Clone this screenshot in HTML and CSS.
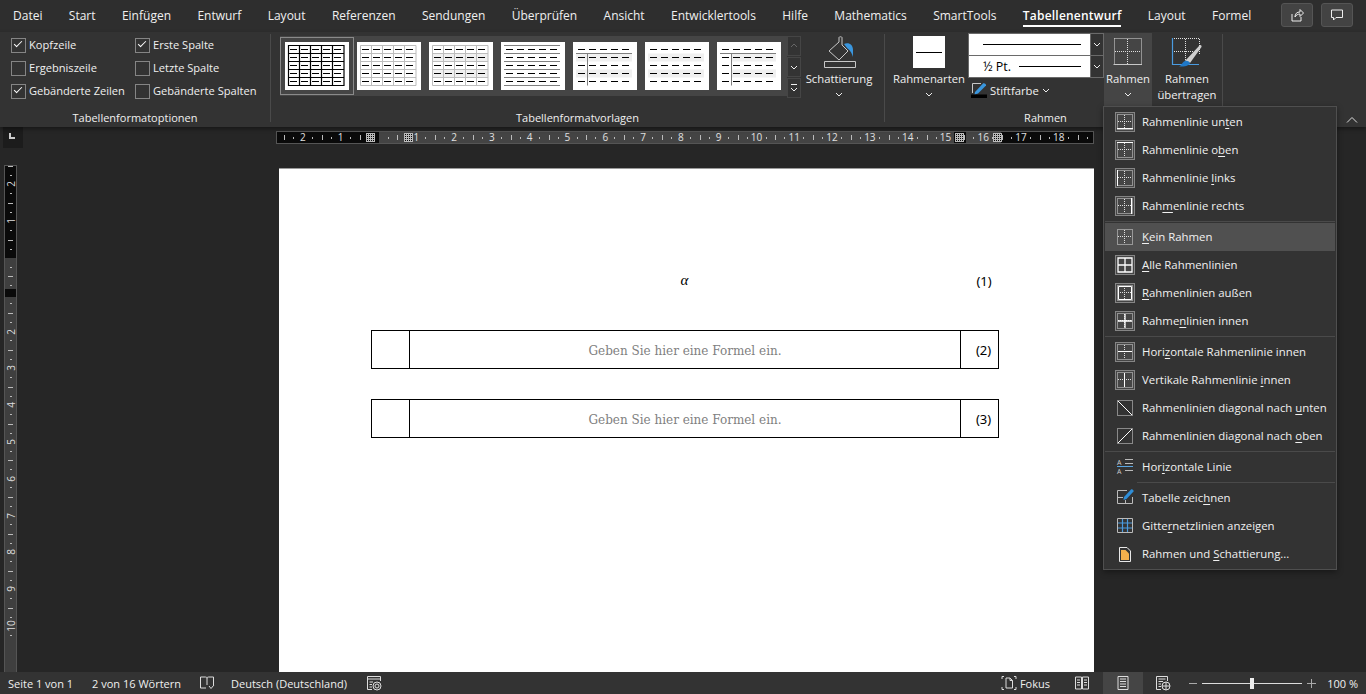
FILE: index.html
```html
<!DOCTYPE html>
<html lang="de">

<head>
    <meta charset="UTF-8" />
    <title>Word - Tabellenentwurf</title>
    <link rel="stylesheet" href="styles.css">
</head>

<body>

    <!-- shared drawings -->
    <svg class="defs" aria-hidden="true">
        <symbol id="dots" viewBox="0 0 20 20">
            <path class="dot" d="M2.5 2.5H17.5V17.5H2.5ZM9.5 3V17M3 9.5H17" />
        </symbol>
        <symbol id="dash" viewBox="0 0 64 48">
            <path class="dash" d="M5 7.5H60M5 15.5H60M5 23.5H60M5 31.5H60M5 39.5H60" />
        </symbol>
    </svg>

    <nav class="tabs">
        <a>Datei</a>
        <a>Start</a>
        <a>Einfügen</a>
        <a>Entwurf</a>
        <a>Layout</a>
        <a>Referenzen</a>
        <a>Sendungen</a>
        <a>Überprüfen</a>
        <a>Ansicht</a>
        <a>Entwicklertools</a>
        <a>Hilfe</a>
        <a>Mathematics</a>
        <a>SmartTools</a>
        <a class="active">Tabellenentwurf</a>
        <a>Layout</a>
        <a>Formel</a>
        <div class="tab-btns">
            <button class="tab-btn"><svg viewBox="0 0 16 16"><path d="M3 7V14H12V10M6 10C6 6.5 8 5 11 5V2.5L14.5 6 11 9.5V7C9 7 7 8 6 10Z" /></svg></button>
            <button class="tab-btn"><svg viewBox="0 0 16 16"><path d="M2.5 3H13.5V10.5H7L4.5 13V10.5H2.5Z" /></svg></button>
        </div>
    </nav>

    <section class="ribbon">
        <div class="group group-options">
            <div class="group-body options">
                <label class="check on">Kopfzeile</label>
                <label class="check on">Erste Spalte</label>
                <label class="check">Ergebniszeile</label>
                <label class="check">Letzte Spalte</label>
                <label class="check on">Gebänderte Zeilen</label>
                <label class="check">Gebänderte Spalten</label>
            </div>
            <div class="group-label">Tabellenformatoptionen</div>
        </div>

        <div class="group group-styles">
            <div class="group-body styles">
                <div class="gallery">
                    <div class="thumb selected"><svg viewBox="0 0 64 48">
                            <use href="#dash" />
                            <path class="k" d="M3.5 3.5H59V43.5H3.5ZM3.5 11.5H59M3.5 19.5H59M3.5 27.5H59M3.5 35.5H59M14.5 3.5V43.5M25.5 3.5V43.5M36.5 3.5V43.5M47.5 3.5V43.5" />
                        </svg></div>
                    <div class="thumb"><svg viewBox="0 0 64 48">
                            <use href="#dash" />
                            <path class="l" d="M3.5 3.5H59V43.5H3.5ZM3.5 11.5H59M3.5 19.5H59M3.5 27.5H59M3.5 35.5H59M14.5 3.5V43.5M25.5 3.5V43.5M36.5 3.5V43.5M47.5 3.5V43.5" />
                        </svg></div>
                    <div class="thumb"><svg viewBox="0 0 64 48">
                            <path class="band" d="M3 11.5H59V19.5H3ZM3 27.5H59V35.5H3Z" />
                            <use href="#dash" />
                            <path class="l" d="M3.5 3.5H59V43.5H3.5ZM3.5 11.5H59M3.5 19.5H59M3.5 27.5H59M3.5 35.5H59M14.5 3.5V43.5M25.5 3.5V43.5M36.5 3.5V43.5M47.5 3.5V43.5" />
                        </svg></div>
                    <div class="thumb"><svg viewBox="0 0 64 48">
                            <use href="#dash" />
                            <path class="m" d="M3 3.5H59M3 11.5H59M3 19.5H59M3 27.5H59M3 35.5H59M3 43.5H59" />
                        </svg></div>
                    <div class="thumb"><svg viewBox="0 0 64 48">
                            <path class="band" d="M3 11.5H59V19.5H3ZM3 27.5H59V35.5H3Z" />
                            <use href="#dash" />
                            <path class="m" d="M3 11.5H59M14.5 11.5V43.5" />
                        </svg></div>
                    <div class="thumb"><svg viewBox="0 0 64 48">
                            <path class="band" d="M3 11.5H59V19.5H3ZM3 27.5H59V35.5H3Z" />
                            <use href="#dash" />
                        </svg></div>
                    <div class="thumb"><svg viewBox="0 0 64 48">
                            <path class="band" d="M14 11.5H59V19.5H14ZM14 27.5H59V35.5H14Z" />
                            <use href="#dash" />
                            <path class="m" d="M3 11.5H59M14.5 11.5V43.5" />
                        </svg></div>
                </div>
                <div class="scroller">
                    <span class="off"><svg viewBox="0 0 12 18"><path d="M3 10L6 7 9 10" /></svg></span>
                    <span><svg viewBox="0 0 12 18"><path d="M3 8L6 11 9 8" /></svg></span>
                    <span><svg viewBox="0 0 12 18"><path d="M3 5.5H9M3 9L6 12 9 9" /></svg></span>
                </div>
                <div class="big shading">
                    <svg class="big-ico" width="36" height="32" viewBox="0 0 36 32">
                        <path class="stroke" d="M8 15L18 6V1.5C18 0.5 21 0.5 21 1.5V9L27 15 18 24Z" />
                        <path d="M23 8C28 6 32 9 32 14V21C31 18 30 15 26 12Z" fill="#3a96dd" />
                        <path class="stroke" d="M3.5 25.5H34.5V31.5H3.5Z" fill="#4a4a4a" />
                    </svg>
                    <span>Schattierung</span>
                    <svg class="chev" viewBox="0 0 8 5"><path d="M1 1L4 4 7 1" /></svg>
                </div>
            </div>
            <div class="group-label">Tabellenformatvorlagen</div>
        </div>

        <div class="group group-borders">
            <div class="group-body borders">
                <div class="big border-styles">
                    <div class="swatch"><i></i></div>
                    <span>Rahmenarten</span>
                    <svg class="chev" viewBox="0 0 8 5"><path d="M1 1L4 4 7 1" /></svg>
                </div>
                <div class="pen">
                    <div class="combo">
                        <div class="combo-val"><i></i></div>
                        <div class="combo-arrow"><svg class="chev" viewBox="0 0 8 5"><path d="M1 1L4 4 7 1" /></svg></div>
                    </div>
                    <div class="combo">
                        <div class="combo-val"><b>½ Pt.</b><i></i></div>
                        <div class="combo-arrow"><svg class="chev" viewBox="0 0 8 5"><path d="M1 1L4 4 7 1" /></svg></div>
                    </div>
                    <div class="pen-color">
                        <svg width="16" height="16" viewBox="0 0 16 16">
                            <path class="stroke" d="M1.5 11V1.5H10" />
                            <path d="M4 10L12 1.5C13 0.5 15.5 2 15 3.5L7 11.5 3.5 12.5Z" fill="#3a96dd" />
                            <path d="M0 12.5H16V16H0Z" fill="#000" />
                        </svg>
                        <span>Stiftfarbe</span>
                        <svg class="chev" viewBox="0 0 8 5"><path d="M1 1L4 4 7 1" /></svg>
                    </div>
                </div>
                <div class="big frame-btn open">
                    <svg class="big-ico" width="30" height="30" viewBox="0 0 30 30">
                        <path class="dot" d="M1.5 1.5H28.5V27M1.5 1.5V27M14.5 2V27M2 14.5H28" />
                        <path class="stroke" d="M0.5 27.5H29" />
                    </svg>
                    <span>Rahmen</span>
                    <svg class="chev" viewBox="0 0 8 5"><path d="M1 1L4 4 7 1" /></svg>
                </div>
                <div class="big frame-copy">
                    <svg class="big-ico" width="32" height="30" viewBox="0 0 32 30">
                        <path class="dot" d="M3 1.5H28.5V17M14.5 2V27M3 14.5H22" />
                        <path class="blue" d="M1.5 1V27.5H28" />
                        <path d="M14 24L28 9C29 7 31 8 30.5 10L19 26Z" fill="#cfcfcf" />
                        <path d="M8 29.5C11 28.5 11 25 14 24 16 23 19 25 19 26 18 28.5 15 30 8 29.5Z" fill="#1f78c8" />
                    </svg>
                    <span>Rahmen<br>übertragen</span>
                </div>
            </div>
            <div class="group-label">Rahmen</div>
        </div>

        <svg class="collapse" viewBox="0 0 12 8"><path d="M1 6.5L6 1.5 11 6.5" /></svg>
    </section>

    <main class="work">
        <div class="left-col">
            <div class="corner"><i></i></div>
            <div class="vruler">
                <div class="vcell"><span>2</span></div>
                <div class="vcell"><span>1</span></div>
                <div class="vcell"></div>
                <div class="vcell"></div>
                <div class="vcell"><span>2</span></div>
                <div class="vcell"><span>3</span></div>
                <div class="vcell"><span>4</span></div>
                <div class="vcell"><span>5</span></div>
                <div class="vcell"><span>6</span></div>
                <div class="vcell"><span>7</span></div>
                <div class="vcell"><span>8</span></div>
                <div class="vcell"><span>9</span></div>
                <div class="vcell"><span>10</span></div>
            </div>
        </div>

        <div class="page-col">
            <div class="hruler">
                <div class="hcell">2</div>
                <div class="hcell">1</div>
                <div class="hcell"></div>
                <div class="hcell">1</div>
                <div class="hcell">2</div>
                <div class="hcell">3</div>
                <div class="hcell">4</div>
                <div class="hcell">5</div>
                <div class="hcell">6</div>
                <div class="hcell">7</div>
                <div class="hcell">8</div>
                <div class="hcell">9</div>
                <div class="hcell">10</div>
                <div class="hcell">11</div>
                <div class="hcell">12</div>
                <div class="hcell">13</div>
                <div class="hcell">14</div>
                <div class="hcell">15</div>
                <div class="hcell">16</div>
                <div class="hcell">17</div>
                <div class="hcell">18</div>
                <div class="hcell"></div>
                <i class="hatch h1"></i>
                <i class="hatch h2"></i>
                <i class="hatch h3"></i>
                <i class="hatch h4"></i>
            </div>
            <article class="page">
                <div class="eq plain">
                    <div></div>
                    <div class="eq-body alpha">α</div>
                    <div class="eq-num">(1)</div>
                </div>
                <div class="eq boxed">
                    <div></div>
                    <div class="eq-body holder">Geben Sie hier eine Formel ein.</div>
                    <div class="eq-num">(2)</div>
                </div>
                <div class="eq boxed">
                    <div></div>
                    <div class="eq-body holder">Geben Sie hier eine Formel ein.</div>
                    <div class="eq-num">(3)</div>
                </div>
            </article>
        </div>
    </main>

    <footer class="status">
        <span class="s-page">Seite 1 von 1</span>
        <span class="s-words">2 von 16 Wörtern</span>
        <svg class="s-ico s-book" viewBox="0 0 16 16"><path d="M1.5 2H6.5C7.5 2 8 2.5 8 3.5V10M8 3.5C8 2.5 8.5 2 9.5 2H14.5V10M1.5 2V13H7M10 11L12 13.5 15 10" /></svg>
        <span class="s-lang">Deutsch (Deutschland)</span>
        <svg class="s-ico s-macro" viewBox="0 0 16 16"><path d="M1.5 1.5H14.5V6M1.5 1.5V14.5H6M1.5 4H14.5M3.5 7H7M3.5 9.5H6M3.5 12H6" /><circle cx="11" cy="11" r="2" /><circle cx="11" cy="11" r="4" /></svg>
        <div class="s-right">
            <svg class="s-ico s-focus" viewBox="0 0 16 16"><path d="M1 4V1.5H3M13 1.5H15V4M1 12V14.5H3M13 14.5H15V12M5 3H9L11.5 5.5V13H5ZM9 3V5.5H11.5" /></svg>
            <span class="s-fokus">Fokus</span>
            <svg class="s-ico s-read" viewBox="0 0 16 16"><path d="M1.5 2H7.5V14H1.5ZM8.5 2H14.5V14H8.5ZM3 5H6M3 7.5H6M3 10H6M10 5H13M10 7.5H13M10 10H13" /></svg>
            <div class="s-view"><svg class="s-ico" viewBox="0 0 16 16"><path d="M3 1.5H13V14.5H3ZM5 4H11M5 6.5H11M5 9H11M5 11.5H11" /></svg></div>
            <svg class="s-ico s-web" viewBox="0 0 16 16"><path d="M6 14.5H1.5V1.5H12.5V6M3.5 4H10.5M3.5 6.5H8M3.5 9H6M3.5 11.5H6" /><circle cx="11" cy="11" r="4" /><path d="M7 11H15M11 7V15" /></svg>
            <div class="zoom">
                <i class="z-minus"></i>
                <div class="z-track"><i class="z-thumb"></i></div>
                <i class="z-plus"></i>
            </div>
            <span class="s-pct">100 %</span>
        </div>
    </footer>

    <!-- Rahmen dropdown -->
    <div class="menu">
        <div class="item"><svg class="box" viewBox="0 0 20 20"><use href="#dots" /><path d="M2 16.5H18" /></svg><span>Rahmenlinie un<u>t</u>en</span></div>
        <div class="item"><svg class="box" viewBox="0 0 20 20"><use href="#dots" /><path d="M2 2.5H18" /></svg><span>Rahmenlinie o<u>b</u>en</span></div>
        <div class="item"><svg class="box" viewBox="0 0 20 20"><use href="#dots" /><path d="M2.5 2V18" /></svg><span>Rahmenlinie <u>l</u>inks</span></div>
        <div class="item"><svg class="box" viewBox="0 0 20 20"><use href="#dots" /><path d="M16.5 2V18" /></svg><span>Rah<u>m</u>enlinie rechts</span></div>
        <hr>
        <div class="item hover"><svg class="box none" viewBox="0 0 20 20"><use href="#dots" /></svg><span><u>K</u>ein Rahmen</span></div>
        <div class="item"><svg class="box" viewBox="0 0 20 20"><path class="wide" d="M3 3H17V17H3ZM10 3V17M3 10H17" /></svg><span><u>A</u>lle Rahmenlinien</span></div>
        <div class="item"><svg class="box" viewBox="0 0 20 20"><use href="#dots" /><path d="M3.5 3.5H16.5V16.5H3.5Z" /></svg><span><u>R</u>ahmenlinien außen</span></div>
        <div class="item"><svg class="box" viewBox="0 0 20 20"><use href="#dots" /><path class="wide" d="M10 3V17M3 10H17" /></svg><span>Rahme<u>n</u>linien innen</span></div>
        <hr>
        <div class="item"><svg class="box" viewBox="0 0 20 20"><use href="#dots" /><path d="M3 9.5H17" /></svg><span>Hori<u>z</u>ontale Rahmenlinie innen</span></div>
        <div class="item"><svg class="box" viewBox="0 0 20 20"><use href="#dots" /><path d="M9.5 3V17" /></svg><span>Vertikale Rahmenlinie <u>i</u>nnen</span></div>
        <div class="item"><svg class="box none" viewBox="0 0 20 20"><path class="dot" d="M2.5 2.5H17.5V17.5H2.5Z" /><path d="M3 3L17 17" /></svg><span>Rahmenlinien diagonal nach <u>u</u>nten</span></div>
        <div class="item"><svg class="box none" viewBox="0 0 20 20"><path class="dot" d="M2.5 2.5H17.5V17.5H2.5Z" /><path d="M3 17L17 3" /></svg><span>Rahmenlinien diagonal nach <u>o</u>ben</span></div>
        <hr>
        <div class="item"><svg class="box none" viewBox="0 0 20 20"><path class="grey" d="M10 2.5H18M10 6.5H18M10 13.5H18" /><path class="thin-blue" d="M2 9.5H18" /><text x="2" y="8">A</text><text x="2" y="17">A</text></svg><span>Hor<u>i</u>zontale Linie</span></div>
        <hr class="short">
        <div class="item"><svg class="box none" viewBox="0 0 20 20"><path class="grey" d="M2.5 2.5H12M2.5 2.5V15.5H17.5V9M2.5 9.5H8M10.5 12V15.5" /><path d="M9 9L16 1.5C17 0.5 19 2 18.5 3.5L11.5 11 8.5 12Z" class="fill-blue" /></svg><span>Tabelle zeic<u>h</u>nen</span></div>
        <div class="item"><svg class="box none" viewBox="0 0 20 20"><path d="M2.5 2.5H17.5V16.5H2.5Z" class="grey" /><path class="blue" d="M3 7H17M3 12H17M7.5 3V16M12.5 3V16" /></svg><span>Gitte<u>r</u>netzlinien anzeigen</span></div>
        <div class="item"><svg class="box none" viewBox="0 0 20 20"><path class="light" d="M4.5 3.5H12L15.5 7V17.5H4.5Z" /><path d="M6 6H10.5L14 9.5V16H6Z" class="fill-orange" /></svg><span>Rahmen und <u>S</u>chattierung...</span></div>
    </div>

</body>

</html>
```

FILE: styles.css
```css
* {
    margin: 0;
    padding: 0;
    box-sizing: border-box;
}

html,
body {
    height: 694px;
    overflow: hidden;
}

body {
    position: relative;
    display: flex;
    flex-direction: column;
    background: #262626;
    color: #f0f0f0;
    font-family: 'Open Sans', 'Noto Sans', sans-serif;
    font-size: 12px;
}

.defs {
    position: absolute;
    width: 0;
    height: 0;
}

.dot {
    fill: none;
    stroke: #e0e0e0;
    stroke-width: 1;
    stroke-dasharray: 1 1;
}

.dash {
    fill: none;
    stroke: #000;
    stroke-width: 1.1;
    stroke-dasharray: 7 4;
}

.stroke {
    fill: none;
    stroke: #c8c8c8;
}

.blue {
    fill: none;
    stroke: #4a9be0;
    stroke-width: 1.2;
}

/* tabs */
.tabs {
    display: flex;
    align-items: flex-start;
    height: 32px;
    padding-left: 13px;
    gap: 26.4px;
    background: #2e2e2e;
}

.tabs a {
    height: 27px;
    line-height: 31px;
    font-size: 12px;
    white-space: nowrap;
}

.tabs a.active {
    font-weight: 600;
    letter-spacing: 0.2px;
    color: #fff;
    border-bottom: 2px solid #fff;
}

.tab-btns {
    display: flex;
    gap: 8px;
    margin: 3px 13px 0 auto;
}

.tab-btn {
    width: 32px;
    height: 24px;
    background: #434343;
    border: 1px solid #555;
    border-radius: 3px;
    display: flex;
    align-items: center;
    justify-content: center;
}

.tab-btn svg {
    width: 16px;
    height: 16px;
    fill: none;
    stroke: #eee;
}

/* ribbon */
.ribbon {
    position: relative;
    display: flex;
    height: 95px;
    background: #333;
    box-shadow: 0 2px 4px rgba(0, 0, 0, 0.4);
    z-index: 2;
}

.group {
    display: flex;
    flex-direction: column;
    border-right: 1px solid #4a4a4a;
    margin: 2px 0 5px;
}

.group-body {
    flex: 1 1 0;
    min-height: 0;
    display: flex;
}

.group-label {
    height: 20px;
    line-height: 31px;
    text-align: center;
    font-size: 11px;
}

.group-options {
    width: 271px;
}

.options {
    display: grid;
    grid-template-columns: 124px 1fr;
    grid-auto-rows: 23px;
    padding: 0 0 0 11px;
}

.check {
    position: relative;
    padding-left: 18px;
    line-height: 21px;
    font-size: 11.1px;
    white-space: nowrap;
}

.check::before {
    content: "";
    position: absolute;
    left: 0;
    top: 4px;
    width: 13px;
    height: 13px;
    border: 1px solid #858585;
}

.check.on::after {
    content: "";
    position: absolute;
    left: 3px;
    top: 7px;
    width: 7px;
    height: 3px;
    border-left: 1px solid #fff;
    border-bottom: 1px solid #fff;
    transform: rotate(-45deg);
}

.group-styles {
    width: 614px;
}

.styles {
    padding-left: 9px;
}

.gallery {
    display: flex;
    align-items: center;
    gap: 8px;
    width: 507px;
    height: 60px;
    margin-top: 2px;
    padding-left: 5px;
    background: #454545;
}

.thumb {
    position: relative;
    width: 64px;
    height: 48px;
    background: #fff;
}

.thumb svg {
    display: block;
    width: 64px;
    height: 48px;
}

.thumb.selected {
    outline: 4px solid #454545;
    box-shadow: 0 0 0 5px #8a8a8a;
}

.k,
.l,
.m {
    fill: none;
}

.k {
    stroke: #000;
    stroke-width: 1.2;
}

.l {
    stroke: #bdbdbd;
}

.m {
    stroke: #7f7f7f;
}

.band {
    fill: #f0f0f0;
}

.scroller {
    display: flex;
    flex-direction: column;
    gap: 1px;
    width: 14px;
    margin: 2px 0 0;
}

.scroller span {
    display: block;
    width: 14px;
    height: 20px;
    border: 1px solid #454545;
}

.scroller svg {
    display: block;
    width: 12px;
    height: 18px;
    fill: none;
    stroke: #eee;
}

.scroller .off svg {
    stroke: #666;
}

.big {
    display: flex;
    flex-direction: column;
    align-items: center;
    line-height: 16px;
    font-size: 11.3px;
    text-align: center;
    white-space: nowrap;
}

.big-ico {
    display: block;
    flex: none;
}

.chev {
    display: block;
    width: 8px;
    height: 5px;
    fill: none;
    stroke: #eee;
}

.big .chev {
    margin-top: 5px;
}

.shading {
    width: 76px;
    padding-top: 2px;
}

.shading span {
    margin-top: 3px;
}

.group-borders {
    width: 338px;
}

.group-borders .group-label {
    padding-right: 16px;
}

.borders {
    padding-left: 5px;
}

.border-styles {
    width: 78px;
    padding-top: 2px;
}

.swatch {
    display: flex;
    align-items: center;
    justify-content: center;
    width: 32px;
    height: 32px;
    background: #fff;
}

.swatch i {
    display: block;
    width: 26px;
    height: 1px;
    background: #000;
}

.border-styles span {
    margin-top: 3px;
}

.pen {
    width: 136px;
    margin-top: -1px;
}

.combo {
    display: flex;
    height: 23px;
    border: 1px solid #6a6a6a;
}

.combo + .combo {
    margin-top: -1px;
}

.combo-val {
    flex: 1;
    display: flex;
    align-items: center;
    gap: 8px;
    padding: 0 9px 0 14px;
    background: #fff;
    color: #000;
    font-size: 12.5px;
}

.combo-val b {
    font-weight: 400;
}

.combo-val i {
    flex: 1;
    height: 1px;
    background: #000;
}

.combo-arrow {
    display: flex;
    align-items: center;
    justify-content: center;
    width: 13px;
    border-left: 1px solid #6a6a6a;
}

.pen-color {
    display: flex;
    align-items: center;
    gap: 3px;
    height: 18px;
    margin-top: 3px;
    padding-left: 3px;
    font-size: 11.3px;
}

.frame-btn {
    flex: none;
    width: 48px;
    height: 74px;
    margin-top: -1px;
    padding-top: 4px;
}

.frame-btn.open {
    background: #454545;
}

.frame-btn span {
    margin-top: 4px;
}

.frame-copy {
    width: 70px;
    padding-top: 3px;
}

.frame-copy span {
    margin-top: 4px;
}

.collapse {
    position: absolute;
    right: 8px;
    top: 84px;
    width: 12px;
    height: 8px;
    fill: none;
    stroke: #ddd;
}

/* document area */
.work {
    flex: 1;
    display: flex;
    min-height: 0;
    overflow: hidden;
}

.left-col {
    width: 276px;
}

.corner {
    width: 20px;
    height: 21px;
    margin-left: 3px;
    padding: 6px;
    background: #1c1c1c;
}

.corner i {
    display: block;
    width: 6px;
    height: 6px;
    border-left: 2px solid #ccc;
    border-bottom: 2px solid #ccc;
}

.vruler {
    width: 13px;
    height: 520px;
    margin: 17px 0 0 4px;
    border: 1px solid #555;
    overflow: hidden;
    background: linear-gradient(to bottom, #0a0a0a 92px, #3f3f3f 92px, #3f3f3f 123px, #0a0a0a 123px, #0a0a0a 131px, #3f3f3f 131px);
}

.vcell {
    position: relative;
    display: flex;
    align-items: center;
    justify-content: center;
    height: 36.8px;
    font-size: 10px;
    color: #ddd;
    background:
        linear-gradient(#bbb, #bbb) center 0 / 5px 1px no-repeat,
        linear-gradient(#bbb, #bbb) center 9px / 2px 1px no-repeat,
        linear-gradient(#bbb, #bbb) center 27px / 2px 1px no-repeat;
}

.vcell span {
    display: block;
    transform: rotate(-90deg);
    line-height: 10px;
}

.page-col {
    width: 818px;
}

.hruler {
    position: relative;
    display: flex;
    height: 13px;
    margin-top: 4px;
    padding-left: 7px;
    border: 1px solid #555;
    overflow: hidden;
    background: linear-gradient(to right, #0a0a0a 102px, #444 102px, #444 677px, #0a0a0a 677px, #0a0a0a 689px, #444 689px, #444 724px, #0a0a0a 724px);
}

.hcell {
    flex: none;
    width: 37.8px;
    text-align: center;
    line-height: 11px;
    font-size: 10px;
    color: #e0e0e0;
    background:
        linear-gradient(#bbb, #bbb) 0 center / 1px 5px no-repeat,
        linear-gradient(#bbb, #bbb) 9px center / 1px 2px no-repeat,
        linear-gradient(#bbb, #bbb) 28px center / 1px 2px no-repeat;
}

.hatch {
    position: absolute;
    top: 1px;
    width: 9px;
    height: 9px;
    background:
        repeating-linear-gradient(to right, #bbb 0 1px, transparent 1px 2px),
        repeating-linear-gradient(to bottom, #bbb 0 1px, #0a0a0a 1px 2px);
}

.h1 {
    left: 89px;
}

.h2 {
    left: 127px;
}

.h3 {
    left: 678px;
}

.h4 {
    left: 716px;
}

.page {
    width: 815px;
    height: 505px;
    margin: 24px 0 0 3px;
    padding: 92px 95px 0 92px;
    background: #fff;
    border-top: 1px solid #9a9a9a;
    color: #000;
}

.eq {
    display: grid;
    grid-template-columns: 37px 1fr 38px;
    height: 39px;
}

.eq.plain,
.eq.boxed {
    margin-bottom: 30px;
}

.eq.boxed {
    border: 1px solid #000;
}

.eq.boxed > div + div {
    border-left: 1px solid #000;
}

.eq-body,
.eq-num {
    display: flex;
    align-items: center;
    justify-content: center;
}

.eq-num {
    padding-left: 8px;
    font-family: 'Noto Sans', sans-serif;
    font-size: 13px;
}

.alpha {
    font-family: 'Liberation Serif', serif;
    font-style: italic;
    font-size: 15px;
}

.holder {
    padding-top: 2px;
    font-family: 'DejaVu Serif', serif;
    font-size: 12px;
    color: #808080;
}

/* status bar */
.status {
    position: relative;
    display: flex;
    align-items: center;
    height: 22px;
    background: #333;
    font-size: 11px;
    z-index: 2;
}

.s-ico {
    display: block;
    width: 16px;
    height: 16px;
    flex: none;
    fill: none;
    stroke: #ddd;
}

.s-page {
    margin-left: 8px;
}

.s-words {
    margin-left: 19px;
}

.s-book {
    margin-left: 18px;
}

.s-lang {
    margin-left: 16px;
}

.s-macro {
    margin-left: 19px;
}

.s-right {
    display: flex;
    align-items: center;
    margin-left: auto;
    height: 22px;
}

.s-fokus {
    margin-left: 3px;
}

.s-read {
    margin-left: 24px;
}

.s-view {
    display: flex;
    align-items: center;
    justify-content: center;
    width: 40px;
    height: 22px;
    margin-left: 13px;
    background: #454545;
}

.s-web {
    margin-left: 12px;
}

.zoom {
    display: flex;
    align-items: center;
    gap: 5px;
    margin-left: 18px;
}

.z-minus {
    display: block;
    width: 8px;
    height: 1px;
    background: #aaa;
}

.z-plus {
    display: block;
    width: 9px;
    height: 9px;
    background: linear-gradient(#aaa, #aaa) center / 9px 1px no-repeat, linear-gradient(#aaa, #aaa) center / 1px 9px no-repeat;
}

.z-track {
    position: relative;
    width: 100px;
    height: 1px;
    background: #ddd;
}

.z-thumb {
    position: absolute;
    left: 48px;
    top: -5px;
    width: 4px;
    height: 11px;
    background: #eee;
}

.s-pct {
    width: 38px;
    margin: 0 8px 0 4px;
    text-align: right;
}

/* dropdown */
.menu {
    position: absolute;
    left: 1103px;
    top: 106px;
    width: 234px;
    height: 464px;
    padding: 1px;
    background: #333;
    border: 1px solid #4f4f4f;
    box-shadow: 0 2px 6px rgba(0, 0, 0, 0.4);
    z-index: 5;
}

.item {
    display: flex;
    align-items: center;
    height: 28px;
    padding-left: 10px;
    font-size: 11.4px;
    white-space: nowrap;
}

.item.hover {
    background: #505050;
}

.item u {
    text-underline-offset: 2px;
}

.item span {
    margin: 0 0 2px 7px;
}

.menu hr {
    height: 1px;
    margin: 1px 0;
    border: 0;
    background: #4a4a4a;
}

.menu hr.short {
    margin-left: 32px;
}

.box {
    display: block;
    flex: none;
    width: 20px;
    height: 20px;
    background: #454545;
    outline: 1px solid #858585;
    outline-offset: -1px;
    fill: none;
    stroke: #fff;
}

.box.none {
    background: none;
    outline: none;
}

.box text {
    font-family: 'Open Sans', sans-serif;
    font-size: 7px;
    fill: #ccc;
    stroke: none;
}

.wide {
    stroke-width: 1.3;
}

.thin-blue {
    stroke: #5aa5e0;
}

.grey {
    stroke: #bbb;
}

.light {
    stroke: #e8e8e8;
}

.fill-blue {
    fill: #2f8ed8;
    stroke: none;
}

.fill-orange {
    fill: #f5b04c;
    stroke: none;
}
```
